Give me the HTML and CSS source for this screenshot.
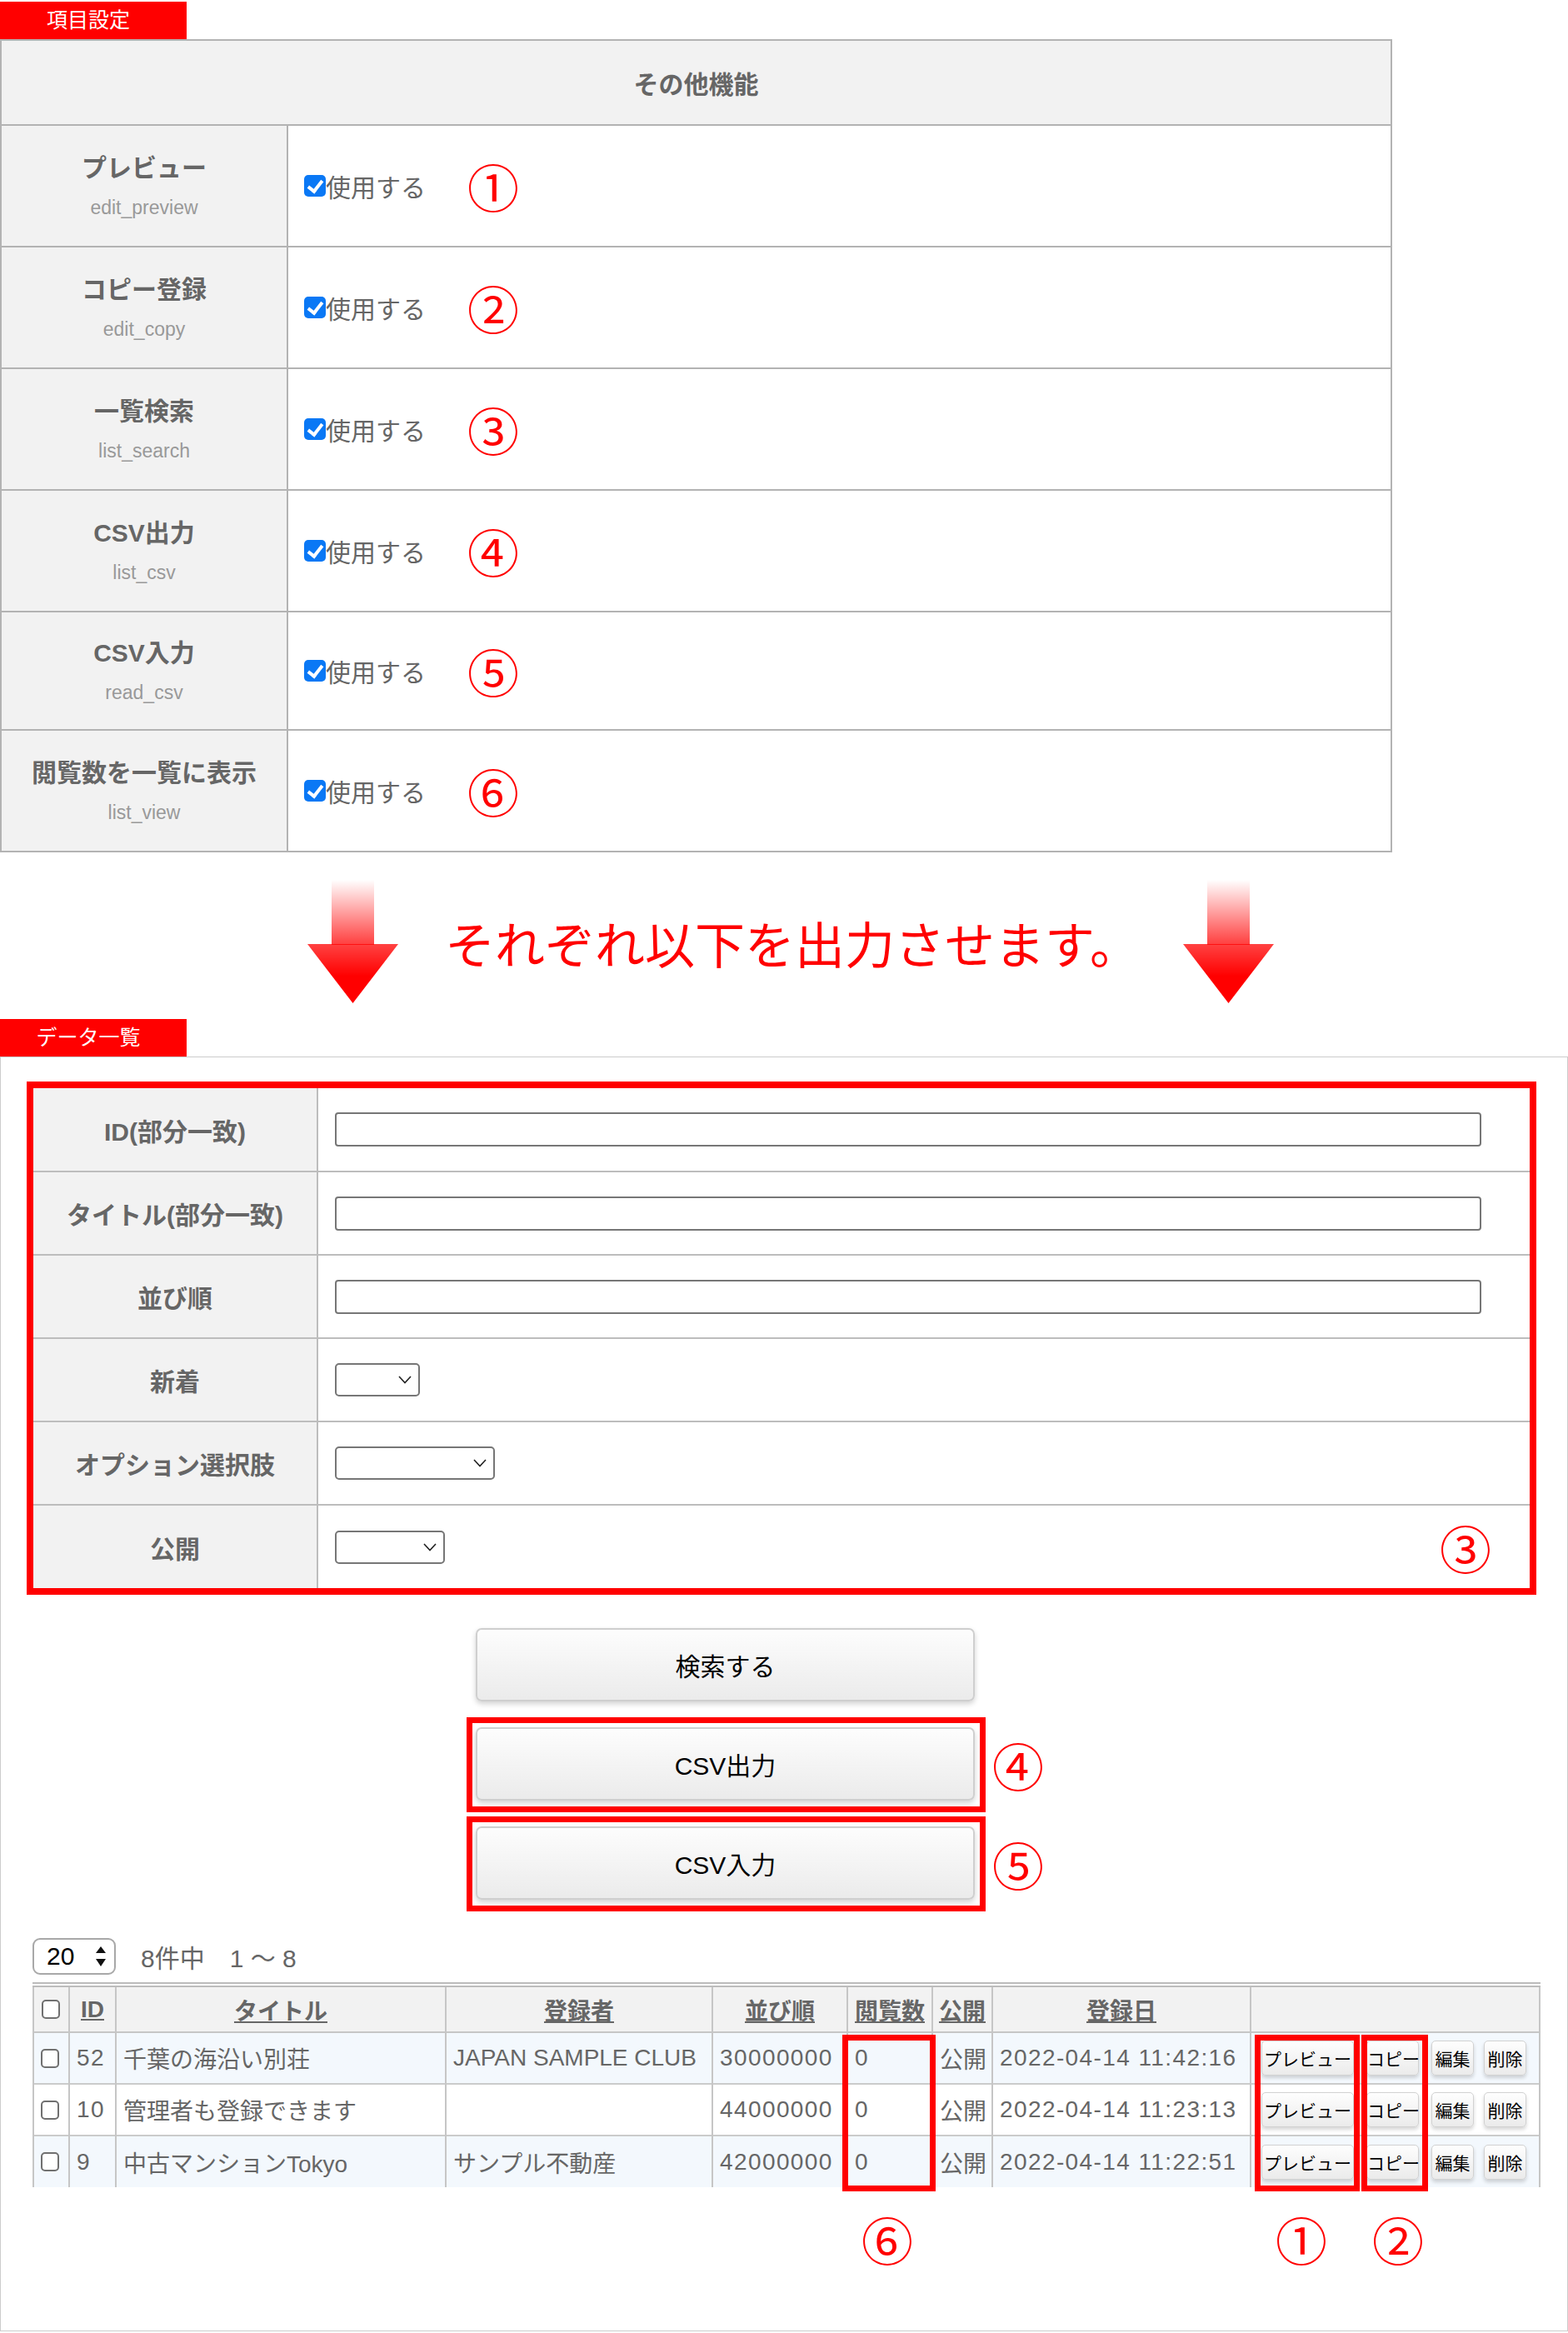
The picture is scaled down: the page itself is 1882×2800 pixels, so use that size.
FILE: index.html
```html
<!DOCTYPE html>
<html lang="ja">
<head>
    <meta charset="UTF-8">
    <meta name="viewport" content="width=device-width, initial-scale=1.0">
    <title>その他機能 - 項目設定</title>
    <link rel="stylesheet" href="styles.css">
</head>
<body>
    <div class="tag tag-top">項目設定</div>

    <table class="setting-table">
        <tr class="setting-head-row">
            <th colspan="2" class="setting-head">その他機能</th>
        </tr>
        <tr>
            <th class="item-label"><span class="item-name">プレビュー</span><span class="item-key">edit_preview</span></th>
            <td class="item-value"><div class="use-row"><label class="use"><input type="checkbox" checked>使用する</label><span class="num num-use">①</span></div></td>
        </tr>
        <tr>
            <th class="item-label"><span class="item-name">コピー登録</span><span class="item-key">edit_copy</span></th>
            <td class="item-value"><div class="use-row"><label class="use"><input type="checkbox" checked>使用する</label><span class="num num-use">②</span></div></td>
        </tr>
        <tr>
            <th class="item-label"><span class="item-name">一覧検索</span><span class="item-key">list_search</span></th>
            <td class="item-value"><div class="use-row"><label class="use"><input type="checkbox" checked>使用する</label><span class="num num-use">③</span></div></td>
        </tr>
        <tr>
            <th class="item-label"><span class="item-name">CSV出力</span><span class="item-key">list_csv</span></th>
            <td class="item-value"><div class="use-row"><label class="use"><input type="checkbox" checked>使用する</label><span class="num num-use">④</span></div></td>
        </tr>
        <tr class="row-short">
            <th class="item-label"><span class="item-name">CSV入力</span><span class="item-key">read_csv</span></th>
            <td class="item-value"><div class="use-row"><label class="use"><input type="checkbox" checked>使用する</label><span class="num num-use">⑤</span></div></td>
        </tr>
        <tr>
            <th class="item-label"><span class="item-name">閲覧数を一覧に表示</span><span class="item-key">list_view</span></th>
            <td class="item-value"><div class="use-row"><label class="use"><input type="checkbox" checked>使用する</label><span class="num num-use">⑥</span></div></td>
        </tr>
    </table>

    <!-- 説明 -->
    <div class="notice">
        <svg class="arrow" width="109" height="148" viewBox="0 0 109 148">
            <defs>
                <linearGradient id="arrowFade" x1="0" y1="0" x2="0" y2="148" gradientUnits="userSpaceOnUse">
                    <stop offset="0" stop-color="#ff0000" stop-opacity="0"/>
                    <stop offset="0.5" stop-color="#ff0000" stop-opacity="0.72"/>
                    <stop offset="0.78" stop-color="#ff0000" stop-opacity="1"/>
                </linearGradient>
            </defs>
            <rect x="29" y="0" width="51" height="78" fill="url(#arrowFade)"/>
            <polygon points="0,77 109,77 54.5,148" fill="url(#arrowFade)"/>
        </svg>
        <p class="notice-text">それぞれ以下を出力させます。</p>
        <svg class="arrow" width="109" height="148" viewBox="0 0 109 148">
            <rect x="29" y="0" width="51" height="78" fill="url(#arrowFade)"/>
            <polygon points="0,77 109,77 54.5,148" fill="url(#arrowFade)"/>
        </svg>
    </div>

    <div class="tag">データ一覧</div>

    <div class="panel">
        <!-- 検索 -->
        <div class="search-box">
            <table class="search-table">
                <tr>
                    <th>ID(部分一致)</th>
                    <td><input type="text" class="text-input"></td>
                </tr>
                <tr>
                    <th>タイトル(部分一致)</th>
                    <td><input type="text" class="text-input"></td>
                </tr>
                <tr>
                    <th>並び順</th>
                    <td><input type="text" class="text-input"></td>
                </tr>
                <tr>
                    <th>新着</th>
                    <td><span class="select select-s"><svg width="16" height="10" viewBox="0 0 16 10"><polyline points="1,1 8,8.5 15,1" fill="none" stroke="#222" stroke-width="1.6"/></svg></span></td>
                </tr>
                <tr>
                    <th>オプション選択肢</th>
                    <td><span class="select select-l"><svg width="16" height="10" viewBox="0 0 16 10"><polyline points="1,1 8,8.5 15,1" fill="none" stroke="#222" stroke-width="1.6"/></svg></span></td>
                </tr>
                <tr>
                    <th>公開</th>
                    <td>
                        <div class="last-cell">
                            <span class="select select-m"><svg width="16" height="10" viewBox="0 0 16 10"><polyline points="1,1 8,8.5 15,1" fill="none" stroke="#222" stroke-width="1.6"/></svg></span>
                            <span class="num">③</span>
                        </div>
                    </td>
                </tr>
            </table>
        </div>

        <div class="actions">
            <div class="action-row"><button class="big-btn">検索する</button></div>
            <div class="action-row marked-row"><span class="mark-box"><button class="big-btn">CSV出力</button></span><span class="num num-btn">④</span></div>
            <div class="action-row marked-row marked-row-2"><span class="mark-box"><button class="big-btn">CSV入力</button></span><span class="num num-btn">⑤</span></div>
        </div>

        <div class="pager">
            <span class="count-select">20<svg width="14" height="26" viewBox="0 0 14 26"><polygon points="7,1 13,9 1,9" fill="#111"/><polygon points="1,16 13,16 7,25" fill="#111"/></svg></span>
            <span class="pager-text">8件中　1 ～ 8</span>
        </div>

        <div class="list-wrap">
            <table class="list-table">
                <colgroup>
                    <col style="width: 43px">
                    <col style="width: 56px">
                    <col style="width: 396px">
                    <col style="width: 320px">
                    <col style="width: 162px">
                    <col style="width: 102px">
                    <col style="width: 72px">
                    <col style="width: 310px">
                    <col style="width: 347px">
                </colgroup>
                <tr>
                    <th><input type="checkbox" class="row-check"></th>
                    <th><a href="#">ID</a></th>
                    <th><a href="#">タイトル</a></th>
                    <th><a href="#">登録者</a></th>
                    <th><a href="#">並び順</a></th>
                    <th><a href="#">閲覧数</a></th>
                    <th><a href="#">公開</a></th>
                    <th><a href="#">登録日</a></th>
                    <th></th>
                </tr>
                <tr class="odd">
                    <td><input type="checkbox" class="row-check"></td>
                    <td class="digits">52</td>
                    <td>千葉の海沿い別荘</td>
                    <td>JAPAN SAMPLE CLUB</td>
                    <td class="digits">30000000</td>
                    <td class="digits">0</td>
                    <td>公開</td>
                    <td class="digits">2022-04-14 11:42:16</td>
                    <td class="btn-cell"><button class="small-btn w-preview">プレビュー</button><button class="small-btn w-copy">コピー</button><button class="small-btn w-short">編集</button><button class="small-btn w-short">削除</button></td>
                </tr>
                <tr>
                    <td><input type="checkbox" class="row-check"></td>
                    <td class="digits">10</td>
                    <td>管理者も登録できます</td>
                    <td></td>
                    <td class="digits">44000000</td>
                    <td class="digits">0</td>
                    <td>公開</td>
                    <td class="digits">2022-04-14 11:23:13</td>
                    <td class="btn-cell"><button class="small-btn w-preview">プレビュー</button><button class="small-btn w-copy">コピー</button><button class="small-btn w-short">編集</button><button class="small-btn w-short">削除</button></td>
                </tr>
                <tr class="odd">
                    <td><input type="checkbox" class="row-check"></td>
                    <td class="digits">9</td>
                    <td>中古マンションTokyo</td>
                    <td>サンプル不動産</td>
                    <td class="digits">42000000</td>
                    <td class="digits">0</td>
                    <td>公開</td>
                    <td class="digits">2022-04-14 11:22:51</td>
                    <td class="btn-cell"><button class="small-btn w-preview">プレビュー</button><button class="small-btn w-copy">コピー</button><button class="small-btn w-short">編集</button><button class="small-btn w-short">削除</button></td>
                </tr>
            </table>
            <!-- 注記の枠 -->
            <span class="mark mark-view"></span>
            <span class="mark mark-preview"></span>
            <span class="mark mark-copy"></span>
        </div>

        <div class="list-notes">
            <span class="num note-view">⑥</span>
            <span class="num note-preview">①</span>
            <span class="num note-copy">②</span>
        </div>
    </div>
</body>
</html>
```

FILE: styles.css
```css
:root {
    --red: #ff0000;
    --line: #b3b3b3;
    --head-bg: #f2f2f2;
    --text: #666;
}
* {
    box-sizing: border-box;
}
body {
    margin: 0;
    font-family: "Liberation Sans", "Noto Sans CJK JP", sans-serif;
    color: var(--text);
    background: #fff;
    width: 1882px;
    height: 2800px;
    overflow: hidden;
}
.tag {
    width: 224px;
    height: 45px;
    padding-right: 12px;
    background: var(--red);
    color: #fff;
    font-size: 25px;
    line-height: 45px;
    text-align: center;
}
.tag-top {
    margin-top: 2px;
}

/* 項目設定 */
.setting-table {
    width: 1671px;
    border-collapse: collapse;
    border: 2px solid var(--line);
}
.setting-table th,
.setting-table td {
    border: 2px solid var(--line);
    padding: 0;
}
.setting-head {
    background: var(--head-bg);
    font-size: 30px;
    font-weight: bold;
    color: var(--text);
}
.setting-table tr {
    height: 146px;
}
.setting-table tr.setting-head-row {
    height: 102px;
}
.setting-table tr.row-short {
    height: 142px;
}
.item-label {
    width: 344px;
    background: var(--head-bg);
    text-align: center;
}
.item-name {
    display: block;
    font-size: 30px;
    font-weight: bold;
    line-height: 40px;
    color: var(--text);
}
.item-key {
    display: block;
    margin-top: 12px;
    font-size: 23px;
    font-weight: normal;
    line-height: 30px;
    color: #999;
}
.use-row {
    display: flex;
    align-items: center;
    padding-left: 19px;
}
.use {
    display: flex;
    align-items: center;
    font-size: 30px;
    color: var(--text);
}
.use input {
    appearance: none;
    position: relative;
    width: 26px;
    height: 26px;
    margin: 0;
    border-radius: 5px;
    background: #0a78f5;
}
.use input::after {
    content: "";
    position: absolute;
    left: 8px;
    top: 3px;
    width: 7px;
    height: 14px;
    border: solid #fff;
    border-width: 0 4px 4px 0;
    transform: rotate(38deg);
}
.num {
    display: inline-block;
    width: 62px;
    font-family: "Noto Sans CJK JP", sans-serif;
    font-size: 62px;
    line-height: 62px;
    text-align: center;
    color: var(--red);
}
.num-use {
    margin-left: 50px;
}

/* 説明 */
.notice {
    display: flex;
    align-items: center;
    height: 200px;
    padding: 33px 0 19px 369px;
}
.arrow {
    flex: none;
    display: block;
}
.notice-text {
    margin: 0 52px 0 56px;
    font-family: "Noto Sans CJK JP", sans-serif;
    font-size: 60px;
    color: var(--red);
    white-space: nowrap;
}

/* データ一覧 */
.panel {
    height: 1530px;
    border: 1px solid #ccc;
    padding: 29px 36px 0 31px;
}
.search-box {
    width: 1812px;
    border: 8px solid var(--red);
}
.search-table {
    width: 100%;
    border-collapse: collapse;
}
.search-table tr {
    height: 100px;
}
.search-table tr + tr {
    border-top: 2px solid #bdbdbd;
}
.search-table th {
    width: 341px;
    background: var(--head-bg);
    border-right: 2px solid #bdbdbd;
    font-size: 30px;
    color: var(--text);
}
.search-table td {
    padding: 0 46px 0 20px;
}
.text-input {
    display: block;
    width: 1376px;
    height: 41px;
    border: 2px solid #767676;
    border-radius: 4px;
}
.select {
    display: inline-flex;
    align-items: center;
    justify-content: flex-end;
    height: 40px;
    padding-right: 8px;
    border: 2px solid #767676;
    border-radius: 5px;
    vertical-align: middle;
}
.select-s {
    width: 102px;
}
.select-l {
    width: 192px;
}
.select-m {
    width: 132px;
}
.last-cell {
    display: flex;
    align-items: center;
    justify-content: space-between;
}
.actions {
    display: flex;
    flex-direction: column;
    margin: 40px 0 0 539px;
}
.action-row {
    display: flex;
    align-items: center;
}
.marked-row {
    margin: 19px 0 0 -11px;
}
.marked-row-2 {
    margin-top: 5px;
}
.mark-box {
    display: block;
    padding: 5px 6px 7px 4px;
    border: 7px solid var(--red);
}
.big-btn {
    display: block;
    width: 599px;
    height: 88px;
    border: 2px solid #cfcfcf;
    border-radius: 7px;
    background: linear-gradient(#fdfdfd, #ebebeb);
    box-shadow: 0 3px 6px rgba(0,0,0,0.18);
    font-family: "Liberation Sans", "Noto Sans CJK JP", sans-serif;
    font-size: 30px;
    color: #000;
}
.num-btn {
    margin-left: 8px;
}
.pager {
    display: flex;
    align-items: center;
    margin: 32px 0 0 7px;
}
.count-select {
    display: inline-flex;
    align-items: center;
    justify-content: space-between;
    width: 100px;
    height: 44px;
    padding: 0 9px 0 15px;
    border: 2px solid #a8a8a8;
    border-radius: 9px;
    font-size: 30px;
    color: #000;
}
.pager-text {
    margin-left: 30px;
    font-size: 30px;
}
.list-wrap {
    position: relative;
    margin: 9px 0 0 7px;
}
.list-table {
    width: 1808px;
    table-layout: fixed;
    border-collapse: collapse;
    border-left: 2px solid #c6c6c6;
    border-right: 2px solid #c6c6c6;
    border-top: 6px double #bcbcbc;
}
.list-table th,
.list-table td {
    border-left: 2px solid #c6c6c6;
    border-right: 2px solid #c6c6c6;
    white-space: nowrap;
    overflow: hidden;
}
.list-table tr + tr td {
    border-top: 2px solid #cbcbcb;
}
.list-table th {
    height: 57px;
    background: var(--head-bg);
    border-bottom: 2px solid #c6c6c6;
    font-size: 28px;
}
.list-table th a {
    color: var(--text);
    font-weight: bold;
}
.list-table td {
    height: 62px;
    padding: 0 4px 0 8px;
    font-size: 28px;
}
.list-table td.digits {
    letter-spacing: 1.4px;
}
.list-table tr.odd td {
    background: #f3f8fd;
}
.row-check {
    appearance: none;
    display: block;
    width: 22px;
    height: 23px;
    margin: 0;
    border: 2px solid #707070;
    border-radius: 5px;
    background: #fff;
}
.list-table th .row-check {
    margin-left: 8px;
}
.btn-cell {
    font-size: 0;
}
.list-table td.btn-cell {
    padding-left: 12px;
}
.small-btn {
    height: 42px;
    padding: 0;
    margin-right: 15px;
    border: 1px solid #d2d2d2;
    border-radius: 5px;
    background: linear-gradient(#fefefe, #ebebeb);
    box-shadow: 0 3px 4px rgba(0,0,0,0.16);
    font-family: "Liberation Sans", "Noto Sans CJK JP", sans-serif;
    font-size: 21px;
    color: #000;
    vertical-align: middle;
}
.w-preview {
    width: 111px;
}
.w-copy {
    width: 63px;
}
.w-short {
    width: 51px;
    margin-right: 12px;
}
.mark {
    position: absolute;
    top: 63px;
    height: 188px;
    border: 7px solid var(--red);
}
.mark-view {
    left: 972px;
    width: 112px;
}
.mark-preview {
    left: 1467px;
    width: 126px;
}
.mark-copy {
    left: 1595px;
    width: 80px;
}
.list-notes {
    display: flex;
    margin: 31px 0 0 1002px;
}
.note-preview {
    margin-left: 435px;
}
.note-copy {
    margin-left: 54px;
}
```
